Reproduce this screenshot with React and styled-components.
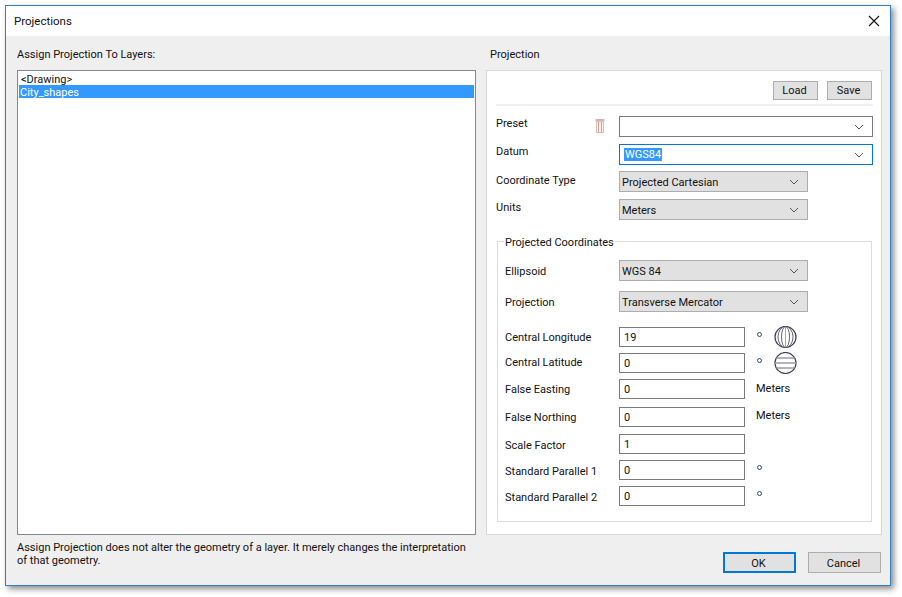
import React from "react";
import styled, { createGlobalStyle } from "styled-components";

const GlobalStyle = createGlobalStyle`
  html, body { margin: 0; padding: 0; background: #fff; }
  body { font-family: Roboto, "Liberation Sans", sans-serif; font-size: 11px; color: #111; }
`;

const Page = styled.div`
  width: 902px;
  height: 597px;
  padding: 5px 0 0 5px;
  box-sizing: border-box;
  overflow: hidden;
`;

const Dialog = styled.div`
  width: 886px;
  height: 581px;
  box-sizing: border-box;
  border: 1px solid #2f80c8;
  background: #efefef;
  box-shadow: 3px 3px 6px rgba(0, 0, 0, 0.45);
  display: flex;
  flex-direction: column;
`;

const TitleBar = styled.div`
  height: 30px;
  flex: none;
  background: #fff;
  display: flex;
  align-items: center;
  justify-content: space-between;
  padding: 0 10px 0 8px;
  font-size: 11.5px;
`;

const Body = styled.div`
  flex: 1;
  display: grid;
  grid-template-columns: 459px 396px;
  column-gap: 10px;
  padding: 0 8px 0 11px;
`;

const Column = styled.div`
  display: flex;
  flex-direction: column;
`;

const Heading = styled.div`
  height: 34px;
  flex: none;
  display: flex;
  align-items: center;
  padding: 3px 0 0 ${(p) => p.$indent || 0}px;
  box-sizing: border-box;
`;

const LayerList = styled.div`
  height: 465px;
  box-sizing: border-box;
  border: 1px solid #828790;
  background: #fff;
  padding: 1px;
`;

const LayerItem = styled.div`
  height: 13px;
  line-height: 16px;
  padding-left: ${(p) => (p.$selected ? 1 : 2)}px;
  background: ${(p) => (p.$selected ? "#3399ff" : "transparent")};
  color: ${(p) => (p.$selected ? "#fff" : "#111")};
`;

const Note = styled.p`
  margin: 6px 0 0;
  line-height: 13px;
  width: 455px;
`;

const Panel = styled.div`
  height: 465px;
  box-sizing: border-box;
  border: 1px solid #d9d9d9;
  background: #fff;
  padding: 10px 9px 0 9px;
`;

const Toolbar = styled.div`
  display: flex;
  justify-content: flex-end;
  gap: 9px;
  height: 25px;
  padding-right: 1px;
  box-sizing: border-box;
  border-bottom: 2px solid #f0f0f0;
  margin-right: -1px;
`;

const Button = styled.button`
  font: inherit;
  color: #111;
  box-sizing: border-box;
  width: ${(p) => p.$width}px;
  height: ${(p) => p.$height}px;
  background: #e1e1e1;
  border: ${(p) => (p.$primary ? "2px solid #0078d7" : "1px solid #adadad")};
  padding: ${(p) => (p.$drop ? 2 : 0)}px 2px 0 0;
`;

const Row = styled.div`
  display: flex;
  align-items: center;
  height: ${(p) => p.$height || 21}px;
  margin-top: ${(p) => p.$top || 0}px;
`;

const Label = styled.div`
  width: ${(p) => p.$width}px;
  flex: none;
  margin-top: ${(p) => p.$shift || 0}px;
`;

const Combo = styled.div`
  box-sizing: border-box;
  width: ${(p) => p.$width}px;
  height: 21px;
  flex: none;
  display: flex;
  align-items: center;
  justify-content: space-between;
  padding: 0 8px 0 ${(p) => p.$pad || 2}px;
  background: ${(p) => (p.$flat ? "#e1e1e1" : "#fff")};
  border: 1px solid ${(p) => (p.$focus ? "#0078d7" : p.$flat ? "#adadad" : "#7a7a7a")};
`;

const ComboText = styled.span`
  margin-top: 2px;
`;

const Selected = styled.span`
  background: #3399ff;
  color: #fff;
  line-height: 13px;
  padding: 0 1px;
`;

const TrashSlot = styled.div`
  width: 24px;
  flex: none;
  display: flex;
  align-items: center;
  margin-top: -1px;
`;

const Group = styled.fieldset`
  margin: 14px 0 0 1px;
  padding: 0 0 0 7px;
  width: 375px;
  height: 288px;
  box-sizing: border-box;
  border: 1px solid #dcdcdc;
  min-width: 0;
`;

const Legend = styled.legend`
  padding: 0 1px;
  margin-left: -1px;
  height: 14px;
  line-height: 17px;
`;

const Field = styled.input`
  box-sizing: border-box;
  width: 126px;
  height: 20px;
  flex: none;
  border: 1px solid #7a7a7a;
  background: #fff;
  font: inherit;
  color: #111;
  padding: 0 0 0 4px;
  outline: none;
`;

const Unit = styled.div`
  margin: ${(p) => p.$up || 0}px 0 0 11px;
`;

const Degree = styled.span`
  width: 5px;
  height: 5px;
  box-sizing: border-box;
  border: 1px solid #33506e;
  border-radius: 50%;
  flex: none;
  margin: ${(p) => p.$up || -6}px 0 0 12px;
`;

const GlobeSlot = styled.div`
  margin: 0 0 0 12px;
  height: 22px;
  display: flex;
`;

const Footer = styled.div`
  display: flex;
  justify-content: flex-end;
  gap: 12px;
  padding: 17px 1px 0 0;
`;

const Chevron = () => (
  <svg width="10" height="6" viewBox="0 0 10 6" fill="none" stroke="#555" strokeWidth="1">
    <path d="M1 1l4 4 4-4" />
  </svg>
);

const CloseIcon = () => (
  <svg width="12" height="12" viewBox="0 0 12 12" fill="none" stroke="#111" strokeWidth="1.1">
    <path d="M1 1l10 10M11 1L1 11" />
  </svg>
);

const TrashIcon = () => (
  <svg width="10" height="14" viewBox="0 0 10 14" fill="none">
    <rect x="0.5" y="0" width="9" height="2" fill="#d8b8b2" />
    <rect x="1.5" y="2.5" width="7" height="11" fill="#f8eeec" stroke="#dcbcb6" />
    <path d="M3.5 3v10M6.5 3v10" stroke="#d2a098" />
  </svg>
);

const LongitudeIcon = () => (
  <svg width="23" height="22" viewBox="0 0 23 22" fill="#fff" stroke="#3d3d55">
    <ellipse cx="11.5" cy="11" rx="10.5" ry="10.5" strokeWidth="1.2" />
    <ellipse cx="11.5" cy="11" rx="7.5" ry="10.5" strokeWidth="0.8" />
    <ellipse cx="11.5" cy="11" rx="4" ry="10.5" strokeWidth="0.8" />
    <path d="M11.5 1v20" strokeWidth="0.8" stroke="#8a8a9c" />
  </svg>
);

const LatitudeIcon = () => (
  <svg width="23" height="22" viewBox="0 0 23 22" fill="#fff" stroke="#3d3d55">
    <circle cx="11.5" cy="11" r="10.5" strokeWidth="1.2" />
    <path d="M2.5 6h18M1 11h21M2.5 16h18" stroke="#9a9aa8" strokeWidth="1.6" />
  </svg>
);

const ProjectionForm = () => (
  <Panel>
    <Toolbar>
      <Button $width={45} $height={19}>Load</Button>
      <Button $width={45} $height={19}>Save</Button>
    </Toolbar>
    <Row $top={10}>
      <Label $width={99} $shift={-6}>Preset</Label>
      <TrashSlot><TrashIcon /></TrashSlot>
      <Combo $width={254}><span /><Chevron /></Combo>
    </Row>
    <Row $top={7}>
      <Label $width={123} $shift={-6}>Datum</Label>
      <Combo $width={254} $focus $pad={4}><Selected>WGS84</Selected><Chevron /></Combo>
    </Row>
    <Row $top={6}>
      <Label $width={123} $shift={-3}>Coordinate Type</Label>
      <Combo $width={189} $flat><ComboText>Projected Cartesian</ComboText><Chevron /></Combo>
    </Row>
    <Row $top={7}>
      <Label $width={123} $shift={-4}>Units</Label>
      <Combo $width={189} $flat><ComboText>Meters</ComboText><Chevron /></Combo>
    </Row>
    <Group>
      <Legend>Projected Coordinates</Legend>
      <Row $top={12}>
        <Label $width={114} $shift={2}>Ellipsoid</Label>
        <Combo $width={189} $flat><ComboText>WGS 84</ComboText><Chevron /></Combo>
      </Row>
      <Row $top={10}>
        <Label $width={114} $shift={2}>Projection</Label>
        <Combo $width={189} $flat><ComboText>Transverse Mercator</ComboText><Chevron /></Combo>
      </Row>
      <Row $top={15} $height={20}>
        <Label $width={114}>Central Longitude</Label>
        <Field defaultValue="19" />
        <Degree />
        <GlobeSlot><LongitudeIcon /></GlobeSlot>
      </Row>
      <Row $top={6} $height={20}>
        <Label $width={114} $shift={-2}>Central Latitude</Label>
        <Field defaultValue="0" />
        <Degree />
        <GlobeSlot><LatitudeIcon /></GlobeSlot>
      </Row>
      <Row $top={6} $height={20}>
        <Label $width={114}>False Easting</Label>
        <Field defaultValue="0" />
        <Unit $up={-2}>Meters</Unit>
      </Row>
      <Row $top={8} $height={20}>
        <Label $width={114}>False Northing</Label>
        <Field defaultValue="0" />
        <Unit $up={-4}>Meters</Unit>
      </Row>
      <Row $top={7} $height={20}>
        <Label $width={114} $shift={2}>Scale Factor</Label>
        <Field defaultValue="1" />
      </Row>
      <Row $top={6} $height={20}>
        <Label $width={114} $shift={2}>Standard Parallel 1</Label>
        <Field defaultValue="0" />
        <Degree $up={-5} />
      </Row>
      <Row $top={6} $height={20}>
        <Label $width={114} $shift={2}>Standard Parallel 2</Label>
        <Field defaultValue="0" />
        <Degree $up={-5} />
      </Row>
    </Group>
  </Panel>
);

export default function App() {
  return (
    <Page>
      <GlobalStyle />
      <Dialog>
        <TitleBar>
          <span>Projections</span>
          <CloseIcon />
        </TitleBar>
        <Body>
          <Column>
            <Heading>Assign Projection To Layers:</Heading>
            <LayerList>
              <LayerItem>&lt;Drawing&gt;</LayerItem>
              <LayerItem $selected>City_shapes</LayerItem>
            </LayerList>
            <Note>
              Assign Projection does not alter the geometry of a layer. It merely changes the interpretation of that
              geometry.
            </Note>
          </Column>
          <Column>
            <Heading $indent={4}>Projection</Heading>
            <ProjectionForm />
            <Footer>
              <Button $primary $drop $width={73} $height={21}>OK</Button>
              <Button $drop $width={73} $height={21}>Cancel</Button>
            </Footer>
          </Column>
        </Body>
      </Dialog>
    </Page>
  );
}
